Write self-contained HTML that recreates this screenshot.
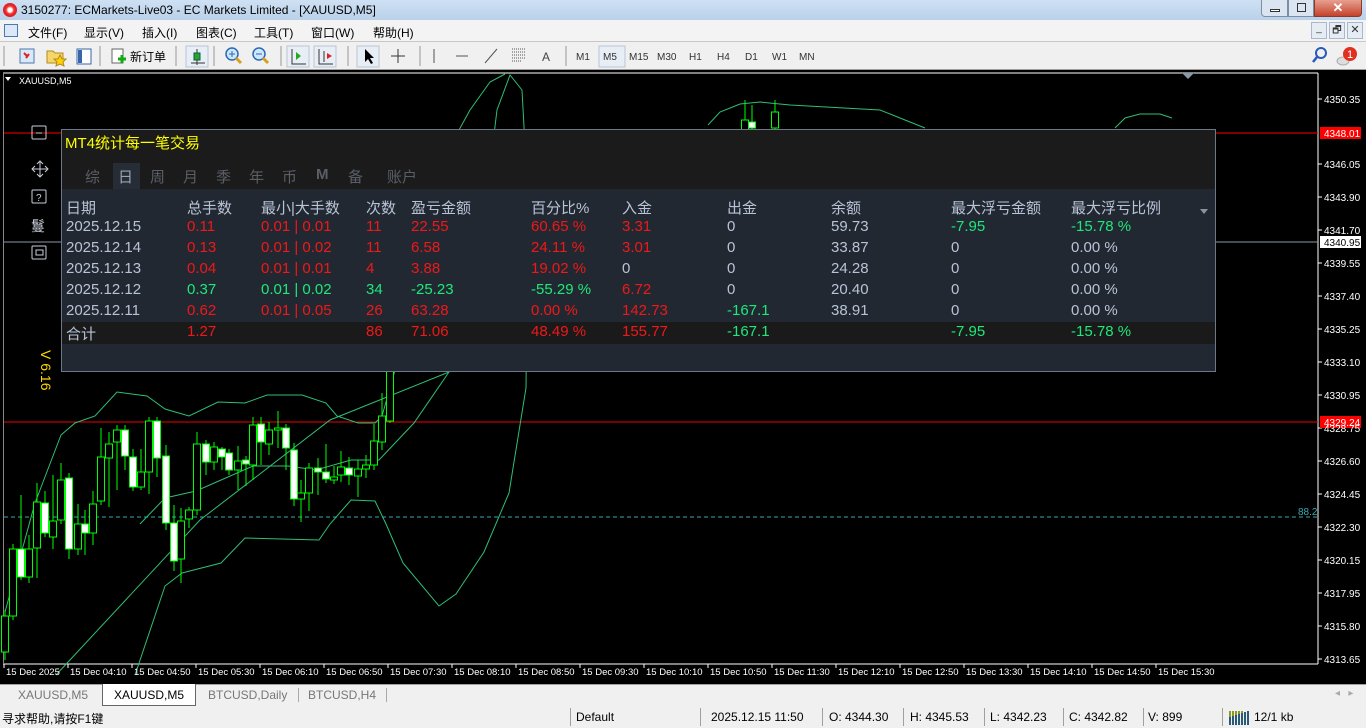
<!DOCTYPE html>
<html><head><meta charset="utf-8">
<style>
*{margin:0;padding:0;box-sizing:border-box}
body{width:1366px;height:728px;overflow:hidden;position:relative;background:#f0f0f0;font-family:"Liberation Sans","Noto Sans CJK SC",sans-serif;font-size:12px;color:#000}
.a{position:absolute;white-space:nowrap}
#title{left:0;top:0;width:1366px;height:20px;background:linear-gradient(#cfe0f3,#b9d1ea);}
#menu{left:0;top:20px;width:1366px;height:22px;background:#f3f3f3;border-bottom:1px solid #c8c8c8}
#tool{left:0;top:42px;width:1366px;height:28px;background:#f0f0f0;border-bottom:1px solid #a0a0a0}
#chart{left:0;top:70px;width:1366px;height:614px;background:#000}
.p{font-size:15px;color:#b8c4d6}
.r{color:#f01818}.g{color:#1ee87a}
.tb{font-size:11px;color:#333}
.ax{font-size:10px;color:#fff;font-family:"Liberation Sans",sans-serif}
.tm{font-size:10px;color:#fff}
.sep{position:absolute;top:708px;width:1px;height:18px;background:#a0a0a0}
.st{font-size:12px;top:710px}
</style></head><body>
<div id="title" class="a"></div>
<div class="a" style="left:3px;top:3px;width:14px;height:14px;border-radius:7px;background:radial-gradient(#fff 20%,#e33 40%,#c00)"></div>
<div class="a" style="left:21px;top:3px;font-size:12px">3150277: ECMarkets-Live03 - EC Markets Limited - [XAUUSD,M5]</div>
<div class="a" style="left:1261px;top:0;width:27px;height:17px;background:#dbe5f1;border:1px solid #7c8ea6;border-top:0;border-radius:0 0 0 4px"><div class="a" style="left:8px;top:9px;width:10px;height:3px;border:1px solid #333;background:#fff"></div></div>
<div class="a" style="left:1288px;top:0;width:26px;height:17px;background:#dbe5f1;border:1px solid #7c8ea6;border-top:0"><div class="a" style="left:8px;top:3px;width:9px;height:9px;border:1px solid #333"></div></div>
<div class="a" style="left:1314px;top:0;width:48px;height:17px;background:linear-gradient(#e8a090,#c5422c);border:1px solid #8a3a2a;border-top:0;border-radius:0 0 4px 0;color:#fff;font-weight:bold;text-align:center;font-size:13px;line-height:16px">✕</div>
<div id="menu" class="a"></div>
<div class="a" style="left:4px;top:24px;width:14px;height:13px;border:1px solid #4a78b0;background:#dbe8f7"></div>
<div class="a" style="top:24px;left:28px">文件(F)</div><div class="a" style="top:24px;left:84px">显示(V)</div><div class="a" style="top:24px;left:142px">插入(I)</div><div class="a" style="top:24px;left:196px">图表(C)</div><div class="a" style="top:24px;left:254px">工具(T)</div><div class="a" style="top:24px;left:311px">窗口(W)</div><div class="a" style="top:24px;left:373px">帮助(H)</div>
<div class="a" style="left:1311px;top:22px;width:16px;height:17px;border:1px solid #a9b8cc;background:#e6ecf4;font-size:10px;text-align:center;color:#333">_</div>
<div class="a" style="left:1329px;top:22px;width:16px;height:17px;border:1px solid #a9b8cc;background:#e6ecf4;font-size:10px;text-align:center;color:#333">🗗</div>
<div class="a" style="left:1347px;top:22px;width:16px;height:17px;border:1px solid #a9b8cc;background:#e6ecf4;font-size:11px;text-align:center;color:#333">✕</div>
<div id="tool" class="a"></div>
<svg class="a" style="left:0;top:42px" width="1366" height="28">
<g fill="none" stroke="#999"><line x1="4" y1="4" x2="4" y2="24"/><line x1="100" y1="4" x2="100" y2="24"/><line x1="176" y1="4" x2="176" y2="24"/><line x1="214" y1="4" x2="214" y2="24"/><line x1="281" y1="4" x2="281" y2="24"/><line x1="348" y1="4" x2="348" y2="24"/><line x1="420" y1="4" x2="420" y2="24"/><line x1="566" y1="4" x2="566" y2="24"/></g>
<rect x="20" y="7" width="14" height="14" fill="#dbe8f7" stroke="#4a78b0"/><path d="M24 11l3 3M29 12l-3 4" stroke="#d22" stroke-width="2"/>
<path d="M47 9h6l2 2h8v10h-16z" fill="#f5d66a" stroke="#b58a1a"/><path d="M60 13l2 4h4l-3 3 1 4-4-2-4 2 1-4-3-3h4z" fill="#ffd200" stroke="#b58a1a"/>
<rect x="77" y="7" width="14" height="15" fill="#fff" stroke="#3a66a8"/><rect x="78" y="8" width="4" height="13" fill="#3a66a8"/>
<rect x="112" y="7" width="11" height="14" fill="#fff" stroke="#666"/><path d="M118 17h8M122 13v8" stroke="#1a1" stroke-width="3"/>
<rect x="186" y="4" width="22" height="21" fill="#e8eef6" stroke="#b8c6d8"/><path d="M197 7v16M191 21h14M197 10v10" stroke="#333"/><rect x="194" y="11" width="6" height="7" fill="#2a2" stroke="#155"/>
<circle cx="232" cy="12" r="6" fill="#cfe6ff" stroke="#2a6ab0" stroke-width="1.5"/><path d="M236 16l5 5" stroke="#d8a020" stroke-width="3"/><path d="M229 12h6M232 9v6" stroke="#2a6ab0"/>
<circle cx="259" cy="12" r="6" fill="#cfe6ff" stroke="#2a6ab0" stroke-width="1.5"/><path d="M263 16l5 5" stroke="#d8a020" stroke-width="3"/><path d="M256 12h6" stroke="#2a6ab0"/>
<rect x="287" y="4" width="22" height="21" fill="#e8eef6" stroke="#b8c6d8"/><path d="M292 7v15h14" stroke="#333" fill="none"/><path d="M296 10l5 4-5 4z" fill="#2a2"/>
<rect x="314" y="4" width="22" height="21" fill="#e8eef6" stroke="#b8c6d8"/><path d="M319 7v15h14M324 9v11" stroke="#333" fill="none"/><path d="M332 14l-5-3v6z" fill="#d22"/>
<rect x="357" y="4" width="22" height="21" fill="#e8eef6" stroke="#b8c6d8"/><path d="M365 7v13l3-3 3 5 2-1-3-5h4z" fill="#000"/>
<path d="M398 7v14M391 14h14" stroke="#333"/>
<path d="M434 7v14M456 14h12M485 21l12-14" stroke="#555"/>
<path d="M512 7h14M512 10h14M512 13h14M512 16h14M512 19h10" stroke="#555" stroke-dasharray="1 1"/>
<text x="542" y="19" font-size="12" fill="#444" font-family="Liberation Sans">A</text>
<rect x="599" y="4" width="26" height="21" fill="#e8eef6" stroke="#b8c6d8"/>
<g font-size="10" fill="#333" font-family="Liberation Sans"><text x="576" y="18">M1</text><text x="603" y="18">M5</text><text x="629" y="18">M15</text><text x="657" y="18">M30</text><text x="689" y="18">H1</text><text x="717" y="18">H4</text><text x="745" y="18">D1</text><text x="772" y="18">W1</text><text x="799" y="18">MN</text></g>
<circle cx="1321" cy="11" r="5" fill="none" stroke="#2a5ab8" stroke-width="2"/><path d="M1317 15l-4 5" stroke="#2a5ab8" stroke-width="2.5"/>
<ellipse cx="1343" cy="19" rx="6" ry="4" fill="#ddd" stroke="#aaa"/><circle cx="1350" cy="12" r="7" fill="#e03020"/><text x="1347" y="16" font-size="11" fill="#fff" font-family="Liberation Sans">1</text>
</svg>
<div class="a tb" style="left:130px;top:48px;font-size:12px;color:#000">新订单</div>
<div id="chart" class="a"></div>
<svg class="a" style="left:0;top:70px" width="1366" height="614">
<line x1="3" y1="3" x2="1318" y2="3" stroke="#fff"/><line x1="1318" y1="3" x2="1318" y2="594" stroke="#fff"/><line x1="3" y1="594" x2="1318" y2="594" stroke="#fff"/><line x1="3.5" y1="3" x2="3.5" y2="594" stroke="#888"/>
<path d="M5 7l6 0-3 4z" fill="#fff"/><text x="19" y="14" font-size="9" fill="#fff" font-family="Liberation Sans">XAUUSD,M5</text>
<path d="M1182 3l6 6 6-6z" fill="#8899aa"/>
<line x1="4" y1="63" x2="1318" y2="63" stroke="#f00"/>
<line x1="4" y1="172" x2="1318" y2="172" stroke="#8a98a8"/>
<line x1="4" y1="352" x2="1318" y2="352" stroke="#e00"/>
<line x1="4" y1="447" x2="1318" y2="447" stroke="#3aa8b0" stroke-dasharray="4 3"/>
<g transform="translate(0,-70)" fill="none" stroke="#2fbf75">
<path d="M56 675L200 520L330 420L449 372L480 250L497 110L510 75L522 90L528 200L526 388L509 493L484 552L456 594L439 606L403 563L386 524L375 501L351 500L330 524L319 540L245 538L221 563L182 573L165 586L135 675"/>
<path d="M5 612L35 503L61 435L75 423L95 416L117 392L147 396L165 409L189 416L218 402L245 403L267 395L302 395L326 403L337 416L358 423L375 423L382 416L395 370"/>
<path d="M140 524L165 498L196 491L253 466L288 466L316 470L351 460L379 460L414 423L449 372"/>
<path d="M459 130L470 110L490 82L505 74"/>
<path d="M708 125L720 112L740 104L760 102L790 105L880 110L905 120L925 128"/>
<path d="M1115 128L1125 118L1140 114L1160 114L1172 118"/>
</g>
<g id="cd" transform="translate(0,-70)"></g>
<g font-size="10" fill="#fff" font-family="Liberation Sans">
<g stroke="#fff"><line x1="1318" y1="29" x2="1322" y2="29"/><line x1="1318" y1="94" x2="1322" y2="94"/><line x1="1318" y1="127" x2="1322" y2="127"/><line x1="1318" y1="160" x2="1322" y2="160"/><line x1="1318" y1="193" x2="1322" y2="193"/><line x1="1318" y1="226" x2="1322" y2="226"/><line x1="1318" y1="259" x2="1322" y2="259"/><line x1="1318" y1="292" x2="1322" y2="292"/><line x1="1318" y1="325" x2="1322" y2="325"/><line x1="1318" y1="358" x2="1322" y2="358"/><line x1="1318" y1="391" x2="1322" y2="391"/><line x1="1318" y1="424" x2="1322" y2="424"/><line x1="1318" y1="457" x2="1322" y2="457"/><line x1="1318" y1="490" x2="1322" y2="490"/><line x1="1318" y1="523" x2="1322" y2="523"/><line x1="1318" y1="556" x2="1322" y2="556"/><line x1="1318" y1="589" x2="1322" y2="589"/></g>
<text x="1324" y="33">4350.35</text>
<rect x="1320" y="57" width="41" height="12" fill="#f00"/><text x="1324" y="67">4348.01</text>
<text x="1324" y="98">4346.05</text><text x="1324" y="131">4343.90</text><text x="1324" y="164">4341.70</text>
<rect x="1320" y="166" width="41" height="12" fill="#fff"/><text x="1324" y="176" fill="#000">4340.95</text>
<text x="1324" y="197">4339.55</text><text x="1324" y="230">4337.40</text><text x="1324" y="263">4335.25</text><text x="1324" y="296">4333.10</text><text x="1324" y="329">4330.95</text>
<rect x="1320" y="346" width="41" height="12" fill="#f00"/><text x="1324" y="356">4329.24</text>
<text x="1324" y="362">4328.75</text><text x="1324" y="395">4326.60</text><text x="1324" y="428">4324.45</text><text x="1324" y="461">4322.30</text><text x="1324" y="494">4320.15</text><text x="1324" y="527">4317.95</text><text x="1324" y="560">4315.80</text><text x="1324" y="593">4313.65</text>
<text x="1298" y="445" fill="#3aa8b0">88.2</text>
</g>
<g id="tl" font-size="9.5" fill="#fff" font-family="Liberation Sans"></g>
<text transform="translate(41,280) rotate(90)" font-size="14" fill="#ffd800" font-family="Liberation Sans">V 6.16</text>
<g fill="none" stroke="#c8d0da">
<rect x="32" y="56" width="14" height="13" rx="1"/><path d="M36 63h6"/>
<path d="M40 91v16M32 99h16M37 94l3-3 3 3M37 104l3 3 3-3M35 96l-3 3 3 3M45 96l3 3-3 3"/>
<rect x="32" y="120" width="14" height="13" rx="1"/>
<rect x="32" y="176" width="14" height="13" rx="1"/><rect x="36" y="180" width="7" height="5"/>
</g>
<text x="36" y="131" font-size="10" fill="#c8d0da" font-family="Liberation Sans">?</text>
<text x="31" y="161" font-size="14" fill="#c8d0da" font-family="Noto Sans CJK SC">鬘</text>
</svg>
<!-- panel -->
<div class="a" style="left:61px;top:129px;width:1155px;height:243px;background:#1b1b1b;border:1px solid #6c7888"></div>
<div class="a" style="left:62px;top:189px;width:1153px;height:182px;background:#222831"></div>
<div class="a" style="left:62px;top:322px;width:1153px;height:22px;background:#1a1a1a"></div>
<div class="a" style="left:113px;top:163px;width:27px;height:26px;background:#262d36"></div>
<div class="a" style="left:65px;top:132px;font-size:15px;color:#ffff00">MT4统计每一笔交易</div>
<div class="a" style="top:166px;left:85px;font-size:15px;color:#5a5f66">综</div>
<div class="a" style="top:166px;left:118px;font-size:15px;color:#9aa4b0">日</div>
<div class="a" style="top:166px;left:150px;font-size:15px;color:#5a5f66">周</div>
<div class="a" style="top:166px;left:183px;font-size:15px;color:#5a5f66">月</div>
<div class="a" style="top:166px;left:216px;font-size:15px;color:#5a5f66">季</div>
<div class="a" style="top:166px;left:249px;font-size:15px;color:#5a5f66">年</div>
<div class="a" style="top:166px;left:282px;font-size:15px;color:#5a5f66">币</div>
<div class="a" style="top:166px;left:316px;font-size:15px;color:#5a5f66;font-weight:bold">M</div>
<div class="a" style="top:166px;left:348px;font-size:15px;color:#5a5f66">备</div>
<div class="a" style="top:166px;left:387px;font-size:15px;color:#5a5f66">账户</div>
<div class="a" style="left:1200px;top:209px;width:0;height:0;border:4px solid transparent;border-top:5px solid #8a94a0"></div>
<div id="tbl"></div>
<!-- tabs -->
<div class="a" style="left:0;top:684px;width:1366px;height:22px;background:#f0f0f0;border-top:1px solid #a0a0a0"></div>
<div class="a" style="left:102px;top:684px;width:94px;height:22px;background:#fff;border:1px solid #666;border-top:0"></div>
<div class="a" style="top:688px;left:18px;color:#777">XAUUSD,M5</div>
<div class="a" style="top:688px;left:114px">XAUUSD,M5</div>
<div class="a" style="top:688px;left:208px;color:#777">BTCUSD,Daily</div>
<div class="a" style="top:688px;left:308px;color:#777">BTCUSD,H4</div>
<div class="a" style="left:298px;top:688px;width:1px;height:14px;background:#aaa"></div>
<div class="a" style="left:386px;top:688px;width:1px;height:14px;background:#aaa"></div>
<div class="a" style="top:688px;left:1335px;color:#aaa;font-size:10px">◂ &nbsp; ▸</div>
<div class="a st" style="left:2px">寻求帮助,请按F1键</div>
<div class="sep" style="left:570px"></div><div class="sep" style="left:700px"></div><div class="sep" style="left:822px"></div><div class="sep" style="left:903px"></div><div class="sep" style="left:984px"></div><div class="sep" style="left:1063px"></div><div class="sep" style="left:1143px"></div><div class="sep" style="left:1222px"></div>
<div class="a st" style="left:576px">Default</div>
<div class="a st" style="left:711px">2025.12.15 11:50</div>
<div class="a st" style="left:829px">O: 4344.30</div>
<div class="a st" style="left:910px">H: 4345.53</div>
<div class="a st" style="left:990px">L: 4342.23</div>
<div class="a st" style="left:1069px">C: 4342.82</div>
<div class="a st" style="left:1148px">V: 899</div>
<svg class="a" style="left:1228px;top:711px" width="22" height="14"><g stroke="#2a5a78" stroke-width="2"><path d="M2 14v-8M5 14v-9M8 14v-10M11 14v-11M14 14v-12M17 14v-13M20 14v-14"/></g><g stroke="#8a9a20" stroke-width="2"><path d="M2 6v-6M5 5v-5M8 4v-4M11 3v-3M14 2v-2"/></g></svg>
<div class="a st" style="left:1254px">12/1 kb</div>
<script>
var C=[[5,616,652,610,660,0],[13,549,616,544,620,0],[21,549,577,495,580,1],[29,549,577,535,583,0],[37,502,548,483,578,0],[45,503,533,491,537,1],[53,521,537,475,549,0],[61,480,520,463,524,0],[69,478,549,473,559,1],[78,524,549,504,555,0],[85,524,533,510,555,1],[93,504,533,491,545,0],[101,457,501,428,505,0],[109,444,458,432,507,0],[117,430,442,425,490,0],[125,430,456,425,470,1],[133,457,487,449,491,1],[141,472,487,449,490,0],[149,421,472,417,494,0],[157,421,458,417,477,1],[166,456,523,445,530,1],[174,523,561,505,571,1],[181,521,559,508,583,0],[189,510,519,507,528,0],[197,444,510,432,515,0],[206,444,462,440,475,1],[214,447,462,442,470,0],[222,449,457,447,470,1],[229,453,470,449,475,1],[238,461,470,446,490,0],[246,460,464,456,486,1],[253,425,465,417,480,0],[261,424,442,417,465,1],[269,430,444,422,455,0],[278,428,430,411,448,0],[286,428,448,424,470,1],[294,450,499,443,506,1],[301,493,499,480,522,0],[309,468,493,463,511,0],[318,468,472,458,495,1],[326,472,479,444,483,1],[334,477,480,466,484,0],[341,467,475,451,482,0],[349,468,475,457,485,1],[358,469,476,460,497,0],[366,465,469,455,478,0],[374,441,465,424,470,0],[382,416,442,393,450,0],[390,370,421,360,423,0],[745,120,130,100,140,0],[752,122,128,105,135,1],[775,112,128,100,135,0]];
var s='';C.forEach(function(c){s+='<line x1="'+c[0]+'" y1="'+c[3]+'" x2="'+c[0]+'" y2="'+c[4]+'" stroke="#00ff00"/>';s+='<rect x="'+(c[0]-3.5)+'" y="'+c[1]+'" width="7" height="'+Math.max(1,c[2]-c[1])+'" fill="'+(c[5]?'#fff':'#000')+'" stroke="#00ff00"/>';});
document.getElementById('cd').innerHTML=s;
var T=['15 Dec 2025','15 Dec 04:10','15 Dec 04:50','15 Dec 05:30','15 Dec 06:10','15 Dec 06:50','15 Dec 07:30','15 Dec 08:10','15 Dec 08:50','15 Dec 09:30','15 Dec 10:10','15 Dec 10:50','15 Dec 11:30','15 Dec 12:10','15 Dec 12:50','15 Dec 13:30','15 Dec 14:10','15 Dec 14:50','15 Dec 15:30'];
var t='';T.forEach(function(x,i){var px=6+i*64;t+='<line x1="'+(px-2)+'" y1="594" x2="'+(px-2)+'" y2="598" stroke="#fff"/><text x="'+px+'" y="605">'+x+'</text>';});
document.getElementById('tl').innerHTML=t;
var X=[66,187,261,366,411,531,622,727,831,951,1071];
var H=['日期','总手数','最小|大手数','次数','盈亏金额','百分比%','入金','出金','余额','最大浮亏金额','最大浮亏比例'];
var R=[[['2025.12.15',''],['0.11','r'],['0.01 | 0.01','r'],['11','r'],['22.55','r'],['60.65 %','r'],['3.31','r'],['0',''],['59.73',''],['-7.95','g'],['-15.78 %','g']],
[['2025.12.14',''],['0.13','r'],['0.01 | 0.02','r'],['11','r'],['6.58','r'],['24.11 %','r'],['3.01','r'],['0',''],['33.87',''],['0',''],['0.00 %','']],
[['2025.12.13',''],['0.04','r'],['0.01 | 0.01','r'],['4','r'],['3.88','r'],['19.02 %','r'],['0',''],['0',''],['24.28',''],['0',''],['0.00 %','']],
[['2025.12.12',''],['0.37','g'],['0.01 | 0.02','g'],['34','g'],['-25.23','g'],['-55.29 %','g'],['6.72','r'],['0',''],['20.40',''],['0',''],['0.00 %','']],
[['2025.12.11',''],['0.62','r'],['0.01 | 0.05','r'],['26','r'],['63.28','r'],['0.00 %','r'],['142.73','r'],['-167.1','g'],['38.91',''],['0',''],['0.00 %','']],
[['合计',''],['1.27','r'],['',''],['86','r'],['71.06','r'],['48.49 %','r'],['155.77','r'],['-167.1','g'],['',''],['-7.95','g'],['-15.78 %','g']]];
var h='';H.forEach(function(x,i){h+='<div class="a p" style="left:'+X[i]+'px;top:197px">'+x+'</div>';});
R.forEach(function(r,j){r.forEach(function(c,i){h+='<div class="a p '+c[1]+'" style="left:'+X[i]+'px;top:'+(218+j*21)+'px">'+c[0]+'</div>';});});
document.getElementById('tbl').innerHTML=h;
</script>
</body></html>
